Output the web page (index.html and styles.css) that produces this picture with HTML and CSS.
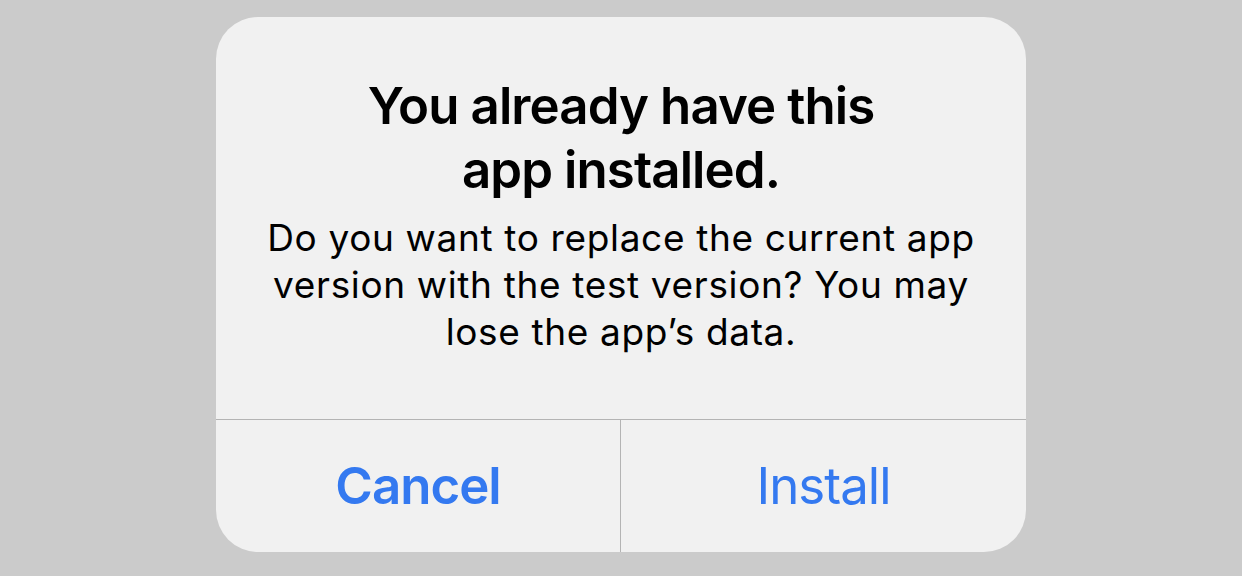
FILE: index.html
```html
<!DOCTYPE html>
<html lang="en">
<head>
  <meta charset="UTF-8">
  <title>Install app</title>
  <link rel="stylesheet" href="styles.css">
</head>
<body>

  <div class="alert">
    <div class="alert-body">
      <h1 class="alert-title">You already have this<br>app installed.</h1>
      <p class="alert-message">Do you want to replace the current app<br>version with the test version? You may<br>lose the app’s data.</p>
    </div>
    <div class="alert-actions">
      <button class="alert-button alert-button-cancel">Cancel</button>
      <button class="alert-button">Install</button>
    </div>
  </div>

</body>
</html>
```

FILE: styles.css
```css
html, body {
  height: 100%;
}

body {
  margin: 0;
  padding-top: 17px;
  box-sizing: border-box;
  background: #cbcbcb;
  font-family: Inter, "Open Sans", sans-serif;
  color: #000;
}

.alert {
  width: 810px;
  margin: 0 auto;
  background: #f1f1f1;
  border-radius: 42px;
  overflow: hidden;
}

.alert-body {
  padding: 57px 40px 64px;
  text-align: center;
}

.alert-title {
  margin: 0 0 12px;
  font-size: 51px;
  line-height: 64px;
  font-weight: 600;
  letter-spacing: -0.9px;
}

.alert-message {
  margin: 0;
  font-size: 37px;
  line-height: 47px;
  font-weight: 400;
  letter-spacing: 0.65px;
}

.alert-actions {
  display: grid;
  grid-template-columns: 405px 1fr;
  border-top: 1px solid #b4b4b4;
}

.alert-button {
  height: 132px;
  padding: 0;
  border: 0;
  background: none;
  font-family: inherit;
  font-size: 51px;
  line-height: 132px;
  font-weight: 400;
  letter-spacing: -1px;
  color: #3479f0;
  cursor: pointer;
}

.alert-button-cancel {
  font-weight: 600;
  border-right: 1px solid #b4b4b4;
}
```
